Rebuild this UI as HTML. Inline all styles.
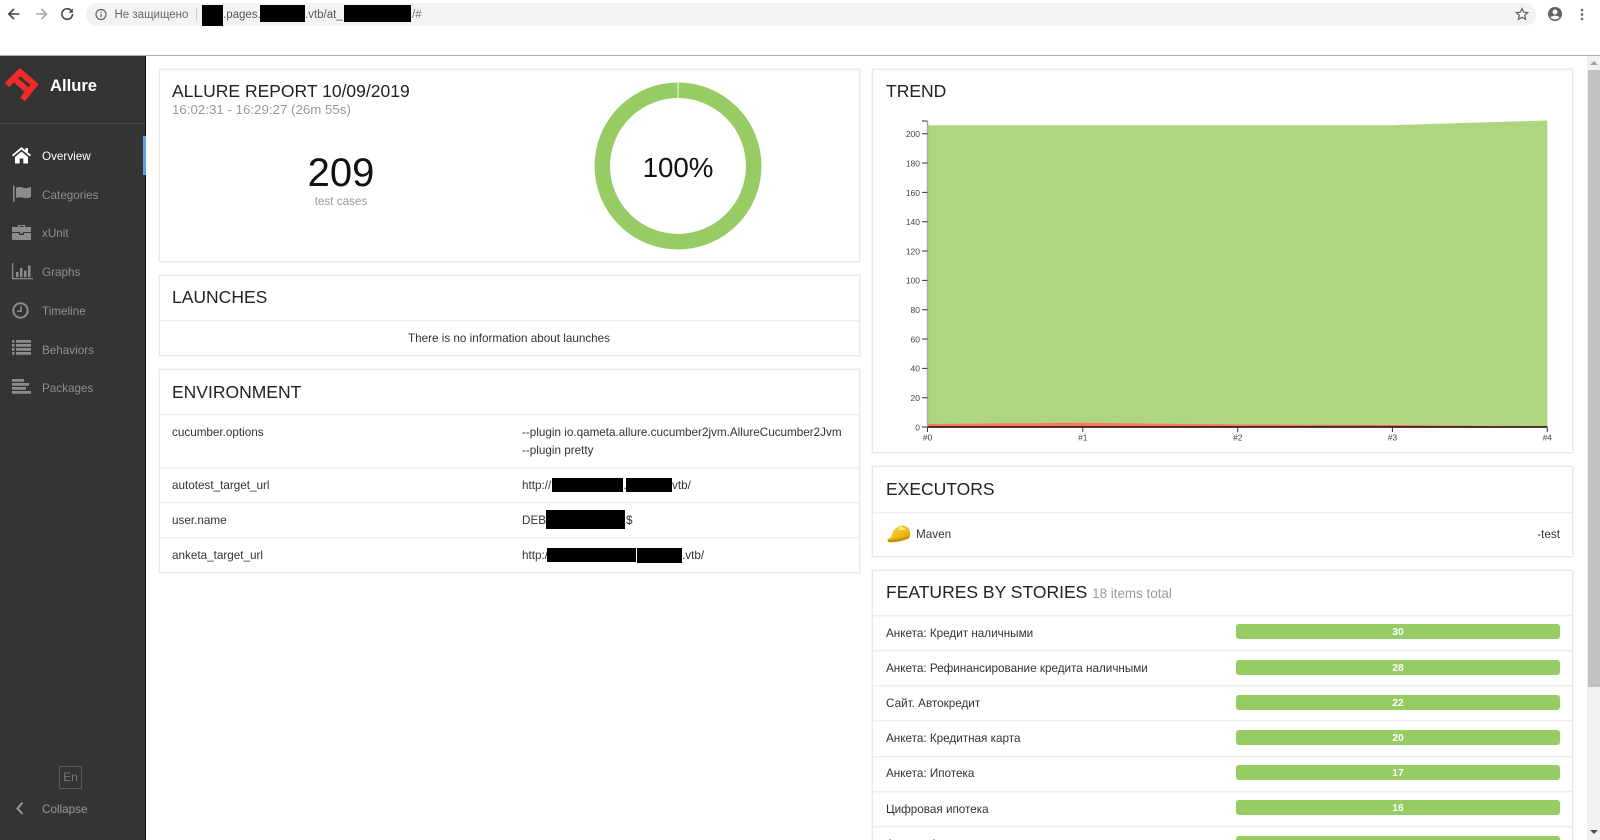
<!DOCTYPE html>
<html><head><meta charset="utf-8"><style>
html,body{margin:0;padding:0;width:1600px;height:840px;overflow:hidden;background:#fff;font-family:"Liberation Sans",sans-serif}
#w{position:relative;width:1600px;height:840px;overflow:hidden;background:#fff}
.a,.t,.c,.b{position:absolute}
.t{white-space:nowrap;line-height:20px;color:#333;font-size:11.7px}
.c{background:#fff;border:1px solid #e9e9e9;box-shadow:0 0 0 1px #f7f7f7;box-sizing:border-box}
.l{position:absolute;height:1px;background:#eee;box-shadow:0 1px 0 #f8f8f8}
.h{font-size:17.5px;color:#222}
.b{background:#000}
.n{color:#999;font-size:11.7px}
.bar{position:absolute;left:1236px;width:324px;height:15px;background:#97cc64;border-radius:3px;color:#fff;font-weight:bold;font-size:10.3px;line-height:17px;text-align:center}
svg{position:absolute;overflow:visible}
.yl{font-size:8.5px;fill:#444;font-family:"Liberation Sans",sans-serif}
</style></head><body><div id="w">

<!-- browser bar -->
<svg style="left:0;top:0" width="90" height="28" fill="none" stroke="#5f6368" stroke-width="1.6">
<path d="M19.500 14H9M14 9l-5.200 5 5.200 5" stroke="#444"/>
<path d="M46.500 14H36M41.500 9l5 5-5 5" stroke="#aaa"/>
<path d="M72.500 14a5.300 5.300 0 1 1-1.500-3.700" stroke="#444"/><path d="M72.800 8.500v4.200h-4.200" fill="#444" stroke="none"/>
</svg>
<div class="a" style="left:86px;top:3px;width:1450px;height:23px;background:#f1f3f4;border-radius:12px"></div>
<svg style="left:94px;top:8px" width="14" height="14" fill="none" stroke="#5f6368" stroke-width="1.200"><circle cx="7" cy="6.500" r="5"/><path d="M7 6v3.200M7 3.800v1.200"/></svg>
<div class="t" style="left:114.500px;top:5px;font-size:11.500px;color:#666">Не защищено</div>
<div class="a" style="left:196px;top:8px;width:1px;height:13px;background:#ccc"></div>
<div class="t" style="left:223px;top:5px;font-size:11.500px;color:#555">.pages.</div>
<div class="t" style="left:305px;top:5px;font-size:11.500px;color:#555">.vtb/at_</div>
<div class="t" style="left:412px;top:5px;font-size:11.500px;color:#777">/#</div>
<div class="b" style="left:202px;top:5px;width:21px;height:21px"></div>
<div class="b" style="left:260px;top:5px;width:45px;height:17px"></div>
<div class="b" style="left:344px;top:5px;width:67px;height:17px"></div>
<svg style="left:1514px;top:6px" width="16" height="16" fill="none" stroke="#5f6368" stroke-width="1.200"><path d="M8 2.500l1.700 3.700 4 .4-3 2.700.9 4L8 11.300l-3.600 2 .9-4-3-2.700 4-.4z"/></svg>
<svg style="left:1547px;top:6px" width="16" height="16"><circle cx="8" cy="8" r="7" fill="#5f6368"/><circle cx="8" cy="6" r="2.500" fill="#fff"/><path d="M3.500 11.500c2-2.500 7-2.500 9 0-2 2.500-7 2.500-9 0z" fill="#fff"/></svg>
<svg style="left:1580px;top:8px" width="4" height="14" fill="#5f6368"><circle cx="2" cy="2" r="1.300"/><circle cx="2" cy="6.500" r="1.300"/><circle cx="2" cy="11" r="1.300"/></svg>
<div class="a" style="left:0;top:55px;width:1600px;height:1px;background:#aaa"></div>

<!-- sidebar -->
<div class="a" style="left:0;top:56px;width:146px;height:784px;background:#343434;border-right:1px solid #111;box-sizing:border-box"></div>
<div class="a" style="left:0;top:123px;width:145px;height:1px;background:#484848"></div>
<div class="a" style="left:143px;top:136px;width:3px;height:39px;background:#5ba3e8"></div>
<svg style="left:0;top:60px" width="46" height="50" fill="none" stroke="#f32a2a" stroke-width="6">
<path d="M7 25L20 12L34.500 24.500L22.500 39.500"/><path d="M14 18.500L27.500 30.500"/></svg>
<div class="t" style="left:50px;top:75.500px;font-size:16.600px;font-weight:bold;color:#fff">Allure</div>

<svg style="left:12px;top:147px" width="20" height="17" fill="#fff"><path d="M9.500 0L0 8l1.200 1.400L9.500 2.500l8.300 6.900L19 8l-3-2.500V1h-2.500v2.400zM3 10v6.500h4.700V11.500h3.600v5H16V10L9.500 4.500z"/></svg>
<svg style="left:13px;top:186px" width="20" height="17" fill="#8c8c8c"><path d="M0 0h1.500v16H0zM3 2c4-3 7 1 11 0l4-1v10c-5 3-8-1-15 1z"/></svg>
<svg style="left:12px;top:224px" width="20" height="17" fill="#8c8c8c"><path d="M6 3V1h7v2h6v5H11v1.500H8V8H0V3zM7.500 2v1h4V2zM0 9h7v2h5V9h7v7H0z"/></svg>
<svg style="left:12px;top:263px" width="21" height="17" fill="#8c8c8c"><path d="M0 0h1.200v15H21v1.300H0zM4 9h2.500v5H4zM8 5h2.500v9H8zM12 7.500h2.500V14H12zM16 2.500h2.500V14H16z"/></svg>
<svg style="left:12px;top:302px" width="17" height="17" fill="none" stroke="#8c8c8c" stroke-width="2"><circle cx="8.500" cy="8.500" r="7.200"/><path d="M9 4v5.200H5" stroke-width="1.500"/></svg>
<svg style="left:12px;top:340px" width="20" height="15" fill="#8c8c8c"><path d="M0 0h2.500v2.800H0zM4 0h15v2.800H4zM0 4h2.500v2.800H0zM4 4h15v2.800H4zM0 8h2.500v2.800H0zM4 8h15v2.800H4zM0 12h2.500v2.800H0zM4 12h15v2.800H4z"/></svg>
<svg style="left:12px;top:379px" width="20" height="15" fill="#8c8c8c"><path d="M0 0h12v2.800H0zM0 4h17v2.800H0zM0 8h14v2.800H0zM0 12h19v2.800H0z"/></svg>

<div class="t" style="left:42px;top:147px;color:#fff">Overview</div>
<div class="t n" style="left:42px;top:186px;color:#8f8f8f">Categories</div>
<div class="t n" style="left:42px;top:224px;color:#8f8f8f">xUnit</div>
<div class="t n" style="left:42px;top:263px;color:#8f8f8f">Graphs</div>
<div class="t n" style="left:42px;top:302px;color:#8f8f8f">Timeline</div>
<div class="t n" style="left:42px;top:341px;color:#8f8f8f">Behaviors</div>
<div class="t n" style="left:42px;top:379px;color:#8f8f8f">Packages</div>
<div class="a" style="left:59px;top:766px;width:23px;height:23px;border:1px solid #5c5c5c;border-radius:2px;box-sizing:border-box;color:#777;font-size:12px;line-height:21px;text-align:center">En</div>
<svg style="left:15px;top:801px" width="10" height="14" fill="none" stroke="#999" stroke-width="2"><path d="M7.500 1.500L2.500 7.500l5 5.500"/></svg>
<div class="t n" style="left:42px;top:799.500px;color:#999">Collapse</div>

<!-- left cards -->
<div class="c" style="left:159px;top:69px;width:701px;height:193px"></div>
<div class="t h" style="left:172px;top:81px">ALLURE REPORT 10/09/2019</div>
<div class="t" style="left:172px;top:100px;font-size:13.300px;color:#999">16:02:31 - 16:29:27 (26m 55s)</div>
<div class="t" style="left:241px;width:200px;text-align:center;top:151px;font-size:40px;line-height:44px;color:#111">209</div>
<div class="t" style="left:241px;width:200px;text-align:center;top:191.500px;color:#999">test cases</div>
<svg style="left:590px;top:78px" width="176" height="176"><circle cx="88" cy="88" r="75.700" fill="none" stroke="#97cc64" stroke-width="15.500"/><rect x="87.400" y="4" width="1.200" height="16" fill="#e8f3de"/></svg>
<div class="t" style="left:578px;width:200px;text-align:center;top:157px;font-size:27.700px;line-height:22px;color:#111">100%</div>

<div class="c" style="left:159px;top:275px;width:701px;height:81px"></div>
<div class="l" style="left:160px;top:320px;width:699px"></div>
<div class="t h" style="left:172px;top:286.500px">LAUNCHES</div>
<div class="t" style="left:159px;width:700px;text-align:center;top:329px">There is no information about launches</div>

<div class="c" style="left:159px;top:369px;width:701px;height:204px"></div>
<div class="t h" style="left:172px;top:382px">ENVIRONMENT</div>
<div class="l" style="left:160px;top:414px;width:699px"></div>
<div class="l" style="left:160px;top:467px;width:699px"></div>
<div class="l" style="left:160px;top:502px;width:699px"></div>
<div class="l" style="left:160px;top:537px;width:699px"></div>
<div class="t" style="left:172px;top:423px">cucumber.options</div>
<div class="t" style="left:172px;top:476px">autotest_target_url</div>
<div class="t" style="left:172px;top:511px">user.name</div>
<div class="t" style="left:172px;top:546px">anketa_target_url</div>
<div class="t" style="left:522px;top:423px">--plugin io.qameta.allure.cucumber2jvm.AllureCucumber2Jvm</div>
<div class="t" style="left:522px;top:441px">--plugin pretty</div>
<div class="t" style="left:522px;top:476px">http://</div>
<div class="t" style="left:623.500px;top:476px">.</div>
<div class="t" style="left:672px;top:476px">vtb/</div>
<div class="t" style="left:522px;top:511px">DEB</div>
<div class="t" style="left:626px;top:511px">$</div>
<div class="t" style="left:522px;top:546px">http:/</div>
<div class="t" style="left:682px;top:546px">.vtb/</div>
<div class="b" style="left:552px;top:478px;width:71px;height:14px"></div>
<div class="b" style="left:626px;top:478px;width:46px;height:14px"></div>
<div class="b" style="left:546px;top:510px;width:79px;height:19px"></div>
<div class="b" style="left:547px;top:548px;width:89px;height:14px"></div>
<div class="b" style="left:637px;top:548px;width:45px;height:15px"></div>

<!-- right cards -->
<div class="c" style="left:872px;top:69px;width:701px;height:384px"></div>
<div class="t h" style="left:886px;top:81px">TREND</div>
<svg style="left:0;top:0" width="1600" height="840">
<path d="M927.500 125.200L1392 125.200L1547.300 120.500V427H927.500z" fill="#aed681"/>
<path d="M927.500 424L1083 422.800L1238 424.500L1392 425L1547 426.800V427H927.500z" fill="#fd7461"/>
<path d="M927.500 427H1547.300" stroke="#200" stroke-width="1.500"/>
<path d="M927.500 121v306" stroke="#aaa" stroke-width="1.500"/>
<g stroke="#333" stroke-width="1">
<path d="M922 121H927.500M922 133.700H927.500M922 163H927.500M922 192.400H927.500M922 221.700H927.500M922 251H927.500M922 280.400H927.500M922 309.700H927.500M922 339H927.500M922 368.400H927.500M922 397.700H927.500M922 427H927.500"/>
<path d="M927.500 427v5M1082.800 427v5M1237.700 427v5M1392.400 427v5M1547.300 427v5"/>
</g>
<g class="yl" text-anchor="end">
<text x="920" y="137">200</text><text x="920" y="166.500">180</text><text x="920" y="195.800">160</text><text x="920" y="225">140</text><text x="920" y="254.400">120</text><text x="920" y="283.700">100</text><text x="920" y="313">80</text><text x="920" y="342.300">60</text><text x="920" y="371.700">40</text><text x="920" y="401">20</text><text x="920" y="430.400">0</text>
</g>
<g class="yl" text-anchor="middle">
<text x="927.500" y="440.500">#0</text><text x="1082.800" y="440.500">#1</text><text x="1237.700" y="440.500">#2</text><text x="1392.400" y="440.500">#3</text><text x="1547.300" y="440.500">#4</text>
</g></svg>

<div class="c" style="left:872px;top:466px;width:701px;height:91px"></div>
<div class="l" style="left:873px;top:511.500px;width:699px"></div>
<div class="t h" style="left:886px;top:478.500px">EXECUTORS</div>
<svg style="left:887px;top:523.500px" width="24" height="20" viewBox="0 0 26 24" preserveAspectRatio="none"><defs><linearGradient id="g" x1="0" y1="0" x2="1" y2="1"><stop offset="0" stop-color="#ffdc3c"/><stop offset="1" stop-color="#dd9f00"/></linearGradient></defs>
<path d="M5 15C6 6 12 2 17 2c5 0 8 4 8 9 0 3 0 5-1 6-6 3-14 4-19 4-3 0-5-1-4-3z" fill="url(#g)"/><path d="M1 19c3 0 14-1 23-5v3c-7 4-16 5-20 5-3 0-4-2-3-3z" fill="#c99000"/><path d="M13 4c3-1 6 0 8 4-3-1-6-1-9 0z" fill="#ffe880"/></svg>
<div class="t" style="left:916px;top:525px">Maven</div>
<div class="t" style="right:40px;top:525px">-test</div>

<div class="c" style="left:872px;top:570px;width:701px;height:290px"></div>
<div class="t h" style="left:886px;top:582px">FEATURES BY STORIES <span style="font-size:13.400px;color:#999">18 items total</span></div>
<div class="l" style="left:873px;top:615px;width:699px"></div>
<div class="l" style="left:873px;top:650px;width:699px"></div>
<div class="l" style="left:873px;top:685px;width:699px"></div>
<div class="l" style="left:873px;top:720px;width:699px"></div>
<div class="l" style="left:873px;top:755.500px;width:699px"></div>
<div class="l" style="left:873px;top:791px;width:699px"></div>
<div class="l" style="left:873px;top:826px;width:699px"></div>
<div class="t" style="left:886px;top:623.500px">Анкета: Кредит наличными</div>
<div class="t" style="left:886px;top:658.500px">Анкета: Рефинансирование кредита наличными</div>
<div class="t" style="left:886px;top:693.500px">Сайт. Автокредит</div>
<div class="t" style="left:886px;top:729px">Анкета: Кредитная карта</div>
<div class="t" style="left:886px;top:764px">Анкета: Ипотека</div>
<div class="t" style="left:886px;top:799.500px">Цифровая ипотека</div>
<div class="t" style="left:886px;top:834.500px">Анкета: Автокредит</div>
<div class="bar" style="top:624.300px">30</div>
<div class="bar" style="top:659.500px">28</div>
<div class="bar" style="top:694.700px">22</div>
<div class="bar" style="top:729.900px">20</div>
<div class="bar" style="top:765.100px">17</div>
<div class="bar" style="top:800.300px">16</div>
<div class="bar" style="top:835.500px">15</div>

<!-- scrollbar -->
<div class="a" style="left:1587px;top:56px;width:13px;height:784px;background:#f1f1f1"></div>
<div class="a" style="left:1588px;top:70px;width:12px;height:617px;background:#c1c1c1"></div>
<svg style="left:1589px;top:60px" width="10" height="6"><path d="M1 5l4-4 4 4z" fill="#a0a0a0"/></svg>
<svg style="left:1589px;top:829px" width="10" height="6"><path d="M1 1l4 4 4-4z" fill="#505050"/></svg>
</div></body></html>
